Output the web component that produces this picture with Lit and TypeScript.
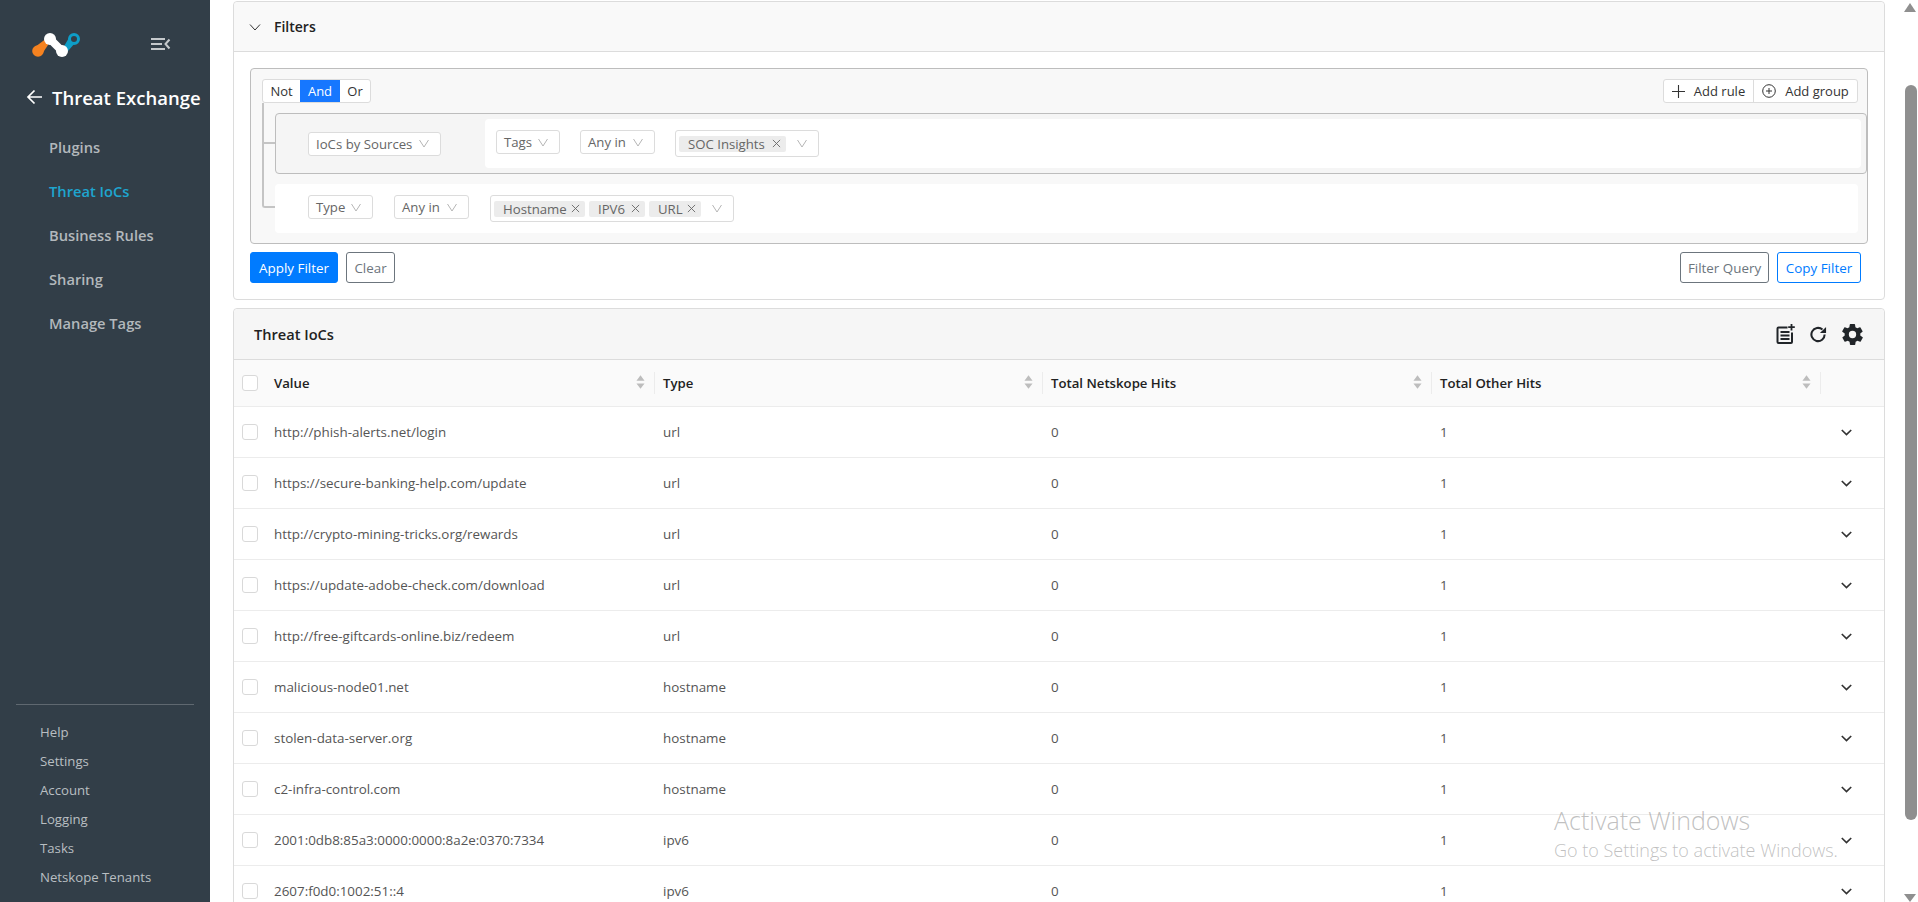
import { LitElement, html, css, svg } from "lit";
import { customElement } from "lit/decorators.js";

const chev = svg`<svg class="chev" viewBox="0 0 10 9" width="10" height="9"><path d="M.5 1l4.500 7 4.500-7" fill="none" stroke="#b5b5b5" stroke-width="1"/></svg>`;
const x = html`<svg class="x" viewBox="0 0 10 10" width="9" height="9"><path d="M1 1l8 8M9 1l-8 8" fill="none" stroke="#666" stroke-width="1"/></svg>`;
const sort = html`<svg class="sort" viewBox="0 0 10 16" width="9" height="15"><path d="M5 0l4.500 6h-9zM5 15l4.500-6h-9z" fill="#bdbdbd"/></svg>`;
const rows = [
  ["http://phish-alerts.net/login", "url"],
  ["https://secure-banking-help.com/update", "url"],
  ["http://crypto-mining-tricks.org/rewards", "url"],
  ["https://update-adobe-check.com/download", "url"],
  ["http://free-giftcards-online.biz/redeem", "url"],
  ["malicious-node01.net", "hostname"],
  ["stolen-data-server.org", "hostname"],
  ["c2-infra-control.com", "hostname"],
  ["2001:0db8:85a3:0000:0000:8a2e:0370:7334", "ipv6"],
  ["2607:f0d0:1002:51::4", "ipv6"],
];

@customElement("app-root")
export class AppRoot extends LitElement {
  static styles = css`
    :host { display: flex; width: 1918px; height: 902px; overflow: hidden; position: relative; background: #fff;
      font-family: "Open Sans", "Noto Sans", sans-serif; font-size: 13.4px; color: #555; }
    * { box-sizing: border-box; }
    .side { width: 210px; flex: none; background: #323e48; display: flex; flex-direction: column; }
    .top { height: 76px; padding: 33px 0 0 32px; display: flex; gap: 70px; align-items: flex-start; }
    .tog { margin-top: 4px; }
    .title { display: flex; align-items: center; gap: 9px; padding-left: 26px; height: 42px; color: #fff; font-size: 18.5px; font-weight: 600; white-space: nowrap; }
    .nav { margin-top: 7px; display: flex; flex-direction: column; }
    .nav a { height: 44px; line-height: 44px; padding-left: 49px; color: #b3b8bc; font-weight: 600; font-size: 14.7px; }
    .nav a.on { color: #1ea5cf; }
    .foot { margin-top: auto; margin-bottom: 10px; margin-left: 16px; width: 178px; border-top: 1px solid #5f6870; padding-top: 13px; }
    .foot a { display: block; height: 29px; line-height: 29px; padding-left: 24px; color: #b9bec2; font-size: 13.2px; white-space: nowrap; }
    .main { flex: 1; padding: 1px 15px 0 23px; overflow: hidden; display: flex; flex-direction: column; gap: 8px; }
    .card { border: 1px solid #dcdcdc; border-radius: 4px; background: #fff; flex: none; }
    .fhead { height: 50px; background: #f9f9f9; border-bottom: 1px solid #dcdcdc; display: flex; align-items: center; gap: 13px; padding-left: 15px; color: #222; font-weight: 600; font-size: 14px; border-radius: 4px 4px 0 0; }
    .fbody { padding: 16px 0 0 16px; height: 247px; display: flex; flex-direction: column; }
    .qb { height: 176px; width: 1618px; border: 1px solid #bdbdbd; border-radius: 4px; background: #f8f8f8; position: relative; padding: 10px 9px 0 11px; flex: none; }
    .qtop { display: flex; justify-content: space-between; }
    .bg { display: flex; height: 24px; border: 1px solid #dcdcdc; border-radius: 3px; background: #fff; color: #333; font-size: 13px; line-height: 22px; }
    .bg span { white-space: nowrap; display: flex; align-items: center; justify-content: center; gap: 9px; }
    .bg span.not { width: 37px; }
    .bg span.and { width: 40px; background: #1677ff; color: #fff; }
    .bg span.or { width: 30px; }
    .bg span.rule-b { width: 89px; }
    .bg span.grp-b { width: 104px; border-left: 1px solid #dcdcdc; }
    .line { position: absolute; left: 11px; top: 34px; width: 13px; height: 105px; border-left: 2px solid #c4c4c4; border-bottom: 2px solid #c4c4c4; border-radius: 0 0 0 3px; }
    .line::after { content: ""; position: absolute; left: 0; width: 11px; top: 39px; border-top: 2px solid #c4c4c4; }
    .grp { margin: 10px 0 0 13px; width: 1592px; height: 61px; border: 1px solid #bdbdbd; border-radius: 4px; background: #f5f5f5; display: flex; align-items: center; padding: 0 5px 0 32px; }
    .in { margin-left: 44px; flex: 1; height: 49px; background: #fff; border-radius: 4px; display: flex; align-items: flex-start; gap: 20px; padding: 11px 0 0 11px; }
    .rule { margin: 10px 0 0 13px; width: 1583px; height: 49px; background: #fff; border-radius: 4px; display: flex; align-items: flex-start; gap: 21px; padding: 11px 0 0 33px; }
    .dd { height: 24px; border: 1px solid #dcdcdc; border-radius: 3px; background: #fff; display: flex; align-items: center; justify-content: space-between; padding: 0 11px 0 7px; font-size: 13.2px; color: #666; white-space: nowrap; }
    .w133 { width: 133px; } .w64 { width: 64px; } .w65 { width: 65px; } .w75 { width: 75px; }
    .chev { flex: none; }
    .ms { height: 27px; border: 1px solid #dcdcdc; border-radius: 3px; background: #fff; display: flex; align-items: center; padding: 0 0 0 3px; gap: 4px; font-size: 13.2px; color: #666; white-space: nowrap; }
    .ms.a { width: 144px; } .ms.b { width: 244px; }
    .chip { height: 16px; background: #ececec; border-radius: 2px; padding: 0 5px 0 9px; display: flex; align-items: center; justify-content: space-between; }
    .c107 { width: 107px; } .c91 { width: 91px; } .c56 { width: 56px; } .c52 { width: 52px; }
    .ms .chev { margin-left: 7px; }
    .acts { display: flex; margin-top: 8px; width: 1611px; justify-content: space-between; }
    .acts > div { display: flex; gap: 8px; }
    .btn { height: 31px; border: 1px solid #6c757d; border-radius: 3px; color: #6c757d; font-size: 13.4px; display: flex; align-items: center; justify-content: center; white-space: nowrap; background: #fff; }
    .btn.pri { background: #007bff; border-color: #007bff; color: #fff; width: 88px; }
    .btn.clr { width: 49px; }
    .btn.fq { width: 89px; }
    .btn.out { border-color: #007bff; color: #007bff; width: 84px; }
    .thead { height: 51px; background: #f6f6f6; border-bottom: 1px solid #dcdcdc; display: flex; align-items: center; justify-content: space-between; padding: 0 21px 0 20px; color: #222; font-weight: 600; font-size: 14.6px; border-radius: 4px 4px 0 0; }
    .icons { display: flex; gap: 15px; align-items: center; }
    .r { display: grid; grid-template-columns: 31px 389px 388px 389px 389px 1fr; height: 51px; align-items: center; border-bottom: 1px solid #ececec; }
    .r.h { height: 47px; background: #fafafa; color: #222; font-weight: 600; font-size: 13.2px; }
    .cb { width: 16px; height: 16px; margin-left: 8px; border: 1px solid #d9d9d9; border-radius: 3px; background: #fff; }
    .c { padding-left: 9px; white-space: nowrap; display: flex; align-items: center; }
    .r.h .c { position: relative; height: 22px; }
    .r.h .c .sort { position: absolute; right: 9px; top: 3px; }
    .r.h .c::after { content: ""; position: absolute; right: -1px; top: 0; height: 22px; border-right: 1px solid #ececec; }
    .exp { padding-left: 21px; display: flex; }
    .sb { width: 18px; flex: none; background: #fff; position: relative; }
    .up { width: 0; height: 0; position: absolute; left: 4px; top: 3px; border: 6.5px solid transparent; border-top: 0; border-bottom: 9px solid #8f8f8f; }
    .dn { width: 0; height: 0; position: absolute; left: 4px; bottom: 0; border: 6.5px solid transparent; border-bottom: 0; border-top: 8px solid #8f8f8f; }
    .th { position: absolute; left: 5px; top: 85px; width: 12px; height: 735px; background: #8f8f8f; border-radius: 6px; }
    .wm { position: absolute; left: 1554px; top: 805px; color: rgba(130,130,130,.5); pointer-events: none; font-weight: 300; white-space: nowrap; }
    .wm div:first-child { font-size: 25px; line-height: 30px; }
    .wm div:last-child { font-size: 18px; line-height: 30px; }
  `;
  render() {
    return html`
      <div class="side">
        <div class="top">
          <svg width="49" height="25" viewBox="0 0 49 25">
            <path d="M3 14L15 5l1 7-6 9z" fill="#f58220"/><circle cx="6" cy="18" r="5.800" fill="#f58220"/>
            <path d="M31 15l7-12 5 7-7 8z" fill="#0e9dc7"/><circle cx="42" cy="6" r="4.500" fill="#323e48" stroke="#0e9dc7" stroke-width="3"/>
            <path d="M18 6L30 18" stroke="#fff" stroke-width="8"/><circle cx="18" cy="6" r="6" fill="#fff"/><circle cx="30" cy="18" r="6" fill="#fff"/>
          </svg>
          <svg class="tog" width="20" height="14" viewBox="0 0 20 14"><path d="M0 2h14M0 7h11M0 12h14" stroke="#c5c9cc" stroke-width="2"/><path d="M18.500 2.500L14.500 7l4 4.500" fill="none" stroke="#c5c9cc" stroke-width="2"/></svg>
        </div>
        <div class="title"><svg width="17" height="16" viewBox="0 0 17 16"><path d="M16 8H2M8.500 1.500L2 8l6.500 6.500" fill="none" stroke="#fff" stroke-width="1.700"/></svg>Threat Exchange</div>
        <div class="nav"><a>Plugins</a><a class="on">Threat IoCs</a><a>Business Rules</a><a>Sharing</a><a>Manage Tags</a></div>
        <div class="foot"><a>Help</a><a>Settings</a><a>Account</a><a>Logging</a><a>Tasks</a><a>Netskope Tenants</a></div>
      </div>
      <div class="main">
        <div class="card">
          <div class="fhead"><svg width="12" height="12" viewBox="0 0 12 12"><path d="M1 3.500l5 5.500 5-5.500" fill="none" stroke="#333" stroke-width="1"/></svg>Filters</div>
          <div class="fbody">
            <div class="qb">
              <div class="line"></div>
              <div class="qtop">
                <div class="bg"><span class="not">Not</span><span class="and">And</span><span class="or">Or</span></div>
                <div class="bg"><span class="rule-b"><svg width="13" height="13" viewBox="0 0 13 13"><path d="M6.500 0v13M0 6.500h13" stroke="#333" stroke-width="1.100"/></svg>Add rule</span><span class="grp-b"><svg width="14" height="14" viewBox="0 0 14 14"><circle cx="7" cy="7" r="6.300" fill="none" stroke="#333"/><path d="M7 4v6M4 7h6" stroke="#333"/></svg>Add group</span></div>
              </div>
              <div class="grp">
                <div class="dd w133">IoCs by Sources ${chev}</div>
                <div class="in">
                  <div class="dd w64">Tags ${chev}</div><div class="dd w75">Any in ${chev}</div>
                  <div class="ms a"><div class="chip c107">SOC Insights ${x}</div>${chev}</div>
                </div>
              </div>
              <div class="rule">
                <div class="dd w65">Type ${chev}</div><div class="dd w75">Any in ${chev}</div>
                <div class="ms b"><div class="chip c91">Hostname ${x}</div><div class="chip c56">IPV6 ${x}</div><div class="chip c52">URL ${x}</div>${chev}</div>
              </div>
            </div>
            <div class="acts">
              <div><div class="btn pri">Apply Filter</div><div class="btn clr">Clear</div></div>
              <div><div class="btn fq">Filter Query</div><div class="btn out">Copy Filter</div></div>
            </div>
          </div>
        </div>
        <div class="card">
          <div class="thead"><span>Threat IoCs</span>
            <div class="icons">
              <svg width="19" height="20" viewBox="0 0 19 20"><path d="M11.500 3.500H2.500a1 1 0 0 0-1 1V18a1 1 0 0 0 1 1H15a1 1 0 0 0 1-1V8.500" fill="none" stroke="#212529" stroke-width="2"/><path d="M4.500 8h9M4.500 11.500h9M4.500 15h9" stroke="#212529" stroke-width="1.800"/><path d="M15.500 0v6.500M12.200 3.200h6.600" stroke="#212529" stroke-width="1.800"/></svg>
              <svg width="17" height="17" viewBox="0 0 18 18"><path d="M15.500 9a7 7 0 1 1-2.300-5.200" fill="none" stroke="#212529" stroke-width="2.200"/><path d="M10.500 7.500H17V1z" fill="#212529"/></svg>
              <svg width="21" height="21" viewBox="2 2 20 20"><path fill="#212529" d="M19.400 13a7.500 7.500 0 0 0 0-2l2.100-1.600a.5.5 0 0 0 .1-.6l-2-3.500a.5.5 0 0 0-.6-.2l-2.500 1a7.300 7.300 0 0 0-1.700-1l-.4-2.600a.5.5 0 0 0-.5-.4h-4a.5.5 0 0 0-.5.4l-.4 2.600a7.300 7.300 0 0 0-1.700 1l-2.500-1a.5.5 0 0 0-.6.2l-2 3.500a.5.5 0 0 0 .1.6L4.600 11a7.500 7.500 0 0 0 0 2l-2.100 1.600a.5.5 0 0 0-.1.6l2 3.500a.5.5 0 0 0 .6.2l2.500-1a7.300 7.300 0 0 0 1.700 1l.4 2.600a.5.5 0 0 0 .5.4h4a.5.5 0 0 0 .5-.4l.4-2.600a7.300 7.300 0 0 0 1.700-1l2.500 1a.5.5 0 0 0 .6-.2l2-3.500a.5.5 0 0 0-.1-.6zM12 15.500a3.500 3.500 0 1 1 0-7 3.500 3.500 0 0 1 0 7z"/></svg>
            </div>
          </div>
          <div class="r h"><div class="cb"></div>
            <div class="c">Value ${sort}</div><div class="c">Type ${sort}</div><div class="c">Total Netskope Hits ${sort}</div><div class="c">Total Other Hits ${sort}</div><div></div></div>
          ${rows.map((r) => html`<div class="r"><div class="cb"></div><div class="c">${r[0]}</div><div class="c">${r[1]}</div><div class="c">0</div><div class="c">1</div>
            <div class="exp"><svg width="11" height="7" viewBox="0 0 11 7"><path d="M.8 1l4.700 4.500L10.200 1" fill="none" stroke="#333" stroke-width="1.700"/></svg></div></div>`)}
        </div>
      </div>
      <div class="sb"><div class="up"></div><div class="th"></div><div class="dn"></div></div>
      <div class="wm"><div>Activate Windows</div><div>Go to Settings to activate Windows.</div></div>
    `;
  }
}
